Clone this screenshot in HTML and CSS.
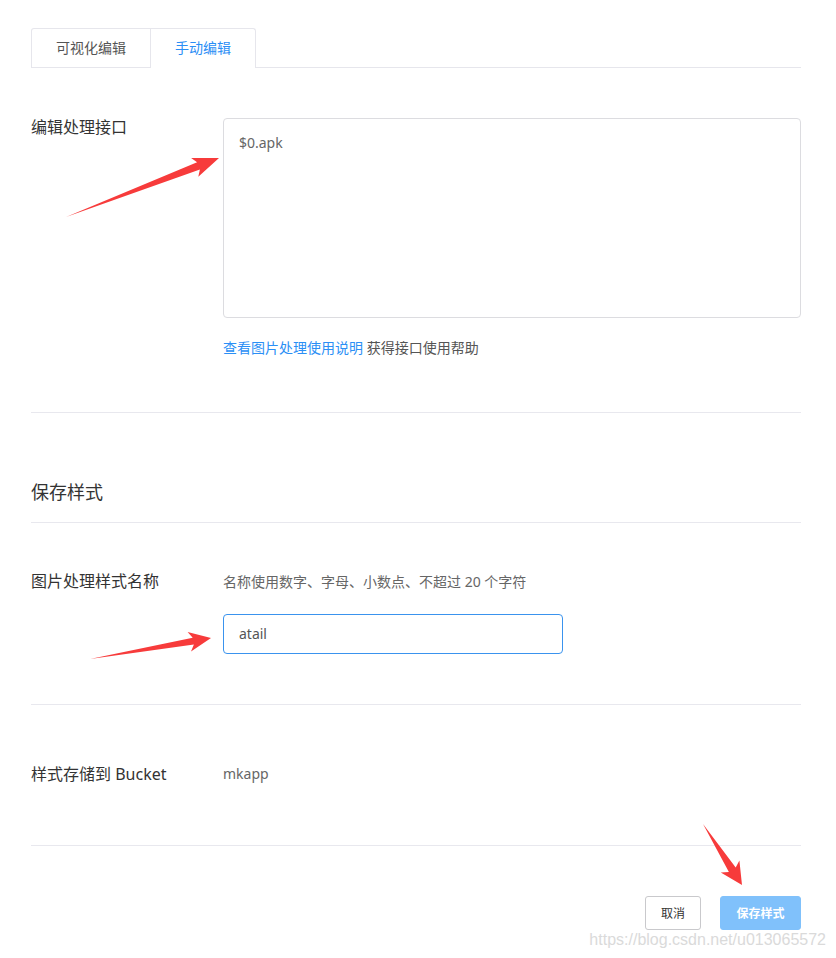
FILE: index.html
```html
<!DOCTYPE html>
<html lang="zh-CN">
<head>
<meta charset="utf-8">
<title>保存样式</title>
<link rel="stylesheet" href="styles.css">
</head>
<body>
<div class="page">
  <div class="tabs">
    <div class="tab">可视化编辑</div>
    <div class="tab tab-active">手动编辑</div>
  </div>

  <section class="row row-editor">
    <div class="label">编辑处理接口</div>
    <div class="field">
      <div class="textarea">$0.apk</div>
      <div class="help"><a class="link">查看图片处理使用说明</a> 获得接口使用帮助</div>
    </div>
  </section>

  <section class="heading-block">
    <h2 class="heading">保存样式</h2>
  </section>

  <section class="row row-name">
    <div class="label">图片处理样式名称</div>
    <div class="field">
      <div class="hint">名称使用数字、字母、小数点、不超过 20 个字符</div>
      <div class="input">atail</div>
    </div>
  </section>

  <section class="row row-bucket">
    <div class="label">样式存储到 Bucket</div>
    <div class="field">
      <div class="value">mkapp</div>
    </div>
  </section>

  <footer class="actions">
    <button class="btn btn-cancel">取消</button>
    <button class="btn btn-save">保存样式</button>
  </footer>
</div>

<svg class="arrows" width="836" height="958" viewBox="0 0 836 958">
  <polygon fill="#f73b3b" points="66,217 197.1,162.2 191.1,158.1 219,158 198.3,176.7 199.9,169.6"/>
  <polygon fill="#f73b3b" points="90,659 192.7,637.7 187.6,632 211,638 191,651.6 193.9,644.5"/>
  <polygon fill="#f73b3b" points="703,824 735.7,867.6 739.4,860.6 742,885 720.8,872.4 728.9,872"/>
</svg>

<div class="watermark">https://blog.csdn.net/u013065572</div>
</body>
</html>
```

FILE: styles.css
```css
html, body {
  margin: 0;
  padding: 0;
  background: #ffffff;
}

body {
  position: relative;
  width: 836px;
  height: 958px;
  overflow: hidden;
  font-family: "Noto Sans", "Noto Sans CJK SC", sans-serif;
  color: #333333;
}

.page {
  padding: 28px 35px 0 31px;
  width: 770px;
}

.tabs {
  display: flex;
  border-bottom: 1px solid #e6e6ec;
  height: 39px;
}

.tab {
  height: 38px;
  line-height: 37px;
  padding: 0 24px;
  border: 1px solid #e6e6ec;
  border-bottom: none;
  font-size: 14px;
  color: #555555;
  background: #ffffff;
  border-radius: 3px 3px 0 0;
}

.tab + .tab {
  border-left: none;
  border-radius: 0 3px 0 0;
}

.tab:first-child {
  border-radius: 3px 0 0 0;
  width: 70px;
}

.tab-active {
  color: #2b8ef5;
  height: 39px;
  width: 56px;
}

.row {
  display: grid;
  grid-template-columns: 192px 1fr;
  border-bottom: 1px solid #e8e8ee;
}

.label {
  font-size: 16px;
  line-height: 18px;
  color: #333333;
}

.row-editor {
  margin-top: 50px;
  padding-bottom: 54px;
}

.textarea {
  box-sizing: border-box;
  height: 200px;
  border: 1px solid #dcdce0;
  border-radius: 4px;
  padding: 14px 15px;
  font-size: 14px;
  line-height: 20px;
  color: #666666;
}

.help {
  margin-top: 20px;
  font-size: 14px;
  line-height: 20px;
  color: #555555;
}

.link {
  color: #2b8ff5;
  text-decoration: none;
}

.heading-block {
  padding: 67px 0 18px;
  border-bottom: 1px solid #e8e8ee;
}

.heading {
  margin: 0;
  font-size: 18px;
  line-height: 24px;
  font-weight: normal;
  color: #333333;
}

.row-name {
  padding-top: 49px;
  padding-bottom: 50px;
}

.hint {
  font-size: 14px;
  line-height: 20px;
  color: #666666;
}

.input {
  box-sizing: border-box;
  margin-top: 22px;
  width: 340px;
  height: 40px;
  border: 1px solid #3a93ee;
  border-radius: 4px;
  padding: 0 15px;
  font-size: 14px;
  line-height: 38px;
  color: #555555;
}

.row-bucket {
  padding-top: 60px;
  padding-bottom: 62px;
}

.value {
  font-size: 14px;
  line-height: 18px;
  color: #666666;
}

.actions {
  display: flex;
  justify-content: flex-end;
  gap: 19px;
  padding-top: 50px;
}

.btn {
  box-sizing: border-box;
  height: 34px;
  border-radius: 3px;
  font-family: "Noto Sans", "Noto Sans CJK SC", sans-serif;
  font-size: 12px;
  padding: 0;
  cursor: pointer;
}

.btn-cancel {
  width: 56px;
  background: #ffffff;
  border: 1px solid #c9c9cc;
  color: #333333;
}

.btn-save {
  width: 81px;
  background: #80c1fb;
  border: 1px solid #80c1fb;
  color: #ffffff;
  font-weight: bold;
}

.arrows {
  position: absolute;
  left: 0;
  top: 0;
  pointer-events: none;
}

.watermark {
  position: absolute;
  right: 10px;
  top: 930px;
  font-family: "Liberation Sans", Arial, sans-serif;
  font-size: 16px;
  line-height: 20px;
  color: #dadada;
  pointer-events: none;
}
```
